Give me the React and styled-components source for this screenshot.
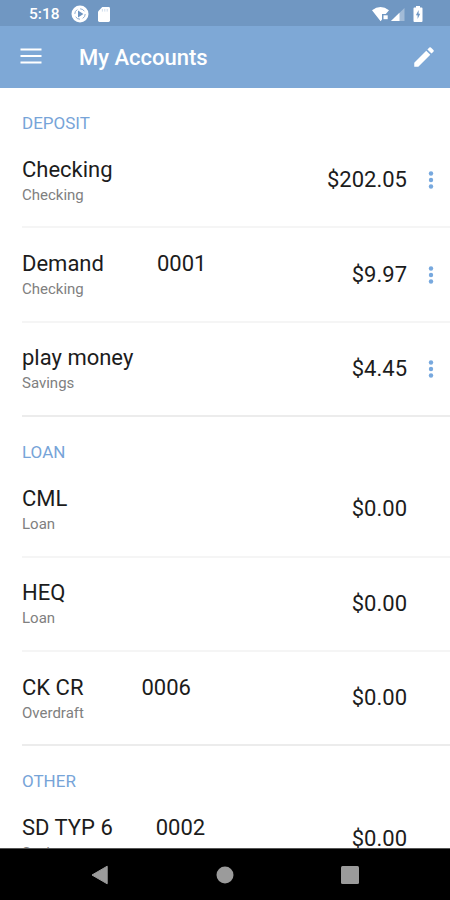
import styled, { createGlobalStyle } from 'styled-components';

const sections = [
  {
    title: 'DEPOSIT',
    accounts: [
      { name: 'Checking', type: 'Checking', balance: '$202.05', menu: true },
      { name: 'Demand', number: '0001', gap: 53, type: 'Checking', balance: '$9.97', menu: true },
      { name: 'play money', type: 'Savings', balance: '$4.45', menu: true },
    ],
  },
  {
    title: 'LOAN',
    accounts: [
      { name: 'CML', type: 'Loan', balance: '$0.00' },
      { name: 'HEQ', type: 'Loan', balance: '$0.00' },
      { name: 'CK CR', number: '0006', gap: 58, type: 'Overdraft', balance: '$0.00' },
    ],
  },
  {
    title: 'OTHER',
    accounts: [
      { name: 'SD TYP 6', number: '0002', gap: 43, type: 'Savings', balance: '$0.00' },
    ],
  },
];

function App() {
  return (
    <Screen>
      <GlobalStyle />
      <StatusBar>
        <Clock>5:18</Clock>
        <StatusIcon $left={11} width="18" height="18" viewBox="0 0 18 18">
          <circle cx="9" cy="9" r="8.5" fill="#fff" />
          <circle cx="9" cy="9" r="5.2" fill="none" stroke="#7097c4" strokeWidth="0.8" strokeDasharray="5 3" />
          <path d="M7 5.6v6.8L12.4 9z" fill="#6d94c1" />
        </StatusIcon>
        <StatusIcon $left={9} width="12" height="15" viewBox="0 0 12 15">
          <path d="M4.3 0H10.6Q12 0 12 1.4V13.6Q12 15 10.6 15H1.4Q0 15 0 13.6V4.4z" fill="#fff" />
          <path d="M4.4 2v2.6M6.8 2v2.6M9.2 2v2.6" stroke="#c8d8ea" strokeWidth="0.9" />
        </StatusIcon>
        <Spacer />
        <StatusIcon width="18" height="15" viewBox="0 0 18 15">
          <path d="M0 3.2Q8.5-3 17 3.2L13.8 7H10v5.6L8.6 14.2z" fill="#fff" />
          <path d="M11.5 8.3h4.2v3.9h-4.2z" fill="#fff" />
        </StatusIcon>
        <StatusIcon $left={1} width="14" height="13" viewBox="0 0 14 13">
          <path d="M13.5 0V13H0z" fill="#fff" fillOpacity="0.35" />
          <path d="M8.5 4.8V13H0z" fill="#fff" />
        </StatusIcon>
        <StatusIcon $left={8} width="10" height="16" viewBox="0 0 10 16">
          <path d="M3 0h4v1.6h1.6q.9 0 .9.9v12.6q0 .9-.9.9H1.4q-.9 0-.9-.9V2.500q0-.9.9-.9H3z" fill="#fff" />
          <path d="M5.600 4L2.900 9.200h1.700V13l2.600-5.200H5.600z" fill="#7097c4" />
        </StatusIcon>
      </StatusBar>
      <AppBar>
        <MenuIcon width="22" height="16" viewBox="0 0 22 16">
          <path d="M0.500 1.500h21M0.500 8h21M0.500 14.500h21" stroke="#fff" strokeWidth="2.200" />
        </MenuIcon>
        <Title>My Accounts</Title>
        <EditIcon width="26" height="26" viewBox="0 0 24 24">
          <path
            d="M3 17.250V21h3.750L17.810 9.940l-3.750-3.750L3 17.250zM20.710 7.040a1 1 0 0 0 0-1.410l-2.340-2.340a1 1 0 0 0-1.410 0l-1.830 1.830 3.750 3.750 1.830-1.830z"
            fill="#fff"
          />
        </EditIcon>
      </AppBar>
      <Content>
        {sections.map((section) => (
          <Section key={section.title}>
            <SectionTitle>{section.title}</SectionTitle>
            {section.accounts.map((account, i) => (
              <Account key={account.name} $last={i === section.accounts.length - 1}>
                <Details>
                  <Name>
                    {account.name}
                    {account.number && <Number $gap={account.gap}>{account.number}</Number>}
                  </Name>
                  <Type>{account.type}</Type>
                </Details>
                <Balance>{account.balance}</Balance>
                <More>
                  {account.menu && (
                    <svg width="6" height="18" viewBox="0 0 6 18" fill="#77a8de">
                      <circle cx="3" cy="2.500" r="2.200" />
                      <circle cx="3" cy="9" r="2.200" />
                      <circle cx="3" cy="15.500" r="2.200" />
                    </svg>
                  )}
                </More>
              </Account>
            ))}
          </Section>
        ))}
      </Content>
      <NavBar>
        <svg width="18" height="20" viewBox="0 0 18 20">
          <path d="M16.200 1.200v17.600L1 10z" fill="#9b9b9b" stroke="#9b9b9b" strokeLinejoin="round" />
        </svg>
        <svg width="18" height="18" viewBox="0 0 18 18">
          <circle cx="9" cy="9" r="8.500" fill="#9b9b9b" />
        </svg>
        <svg width="18" height="18" viewBox="0 0 18 18">
          <rect width="18" height="18" rx="1.500" fill="#9b9b9b" />
        </svg>
      </NavBar>
    </Screen>
  );
}

export default App;

const GlobalStyle = createGlobalStyle`
  * {
    box-sizing: border-box;
  }
  body {
    margin: 0;
    background: #fff;
    font-family: Roboto, sans-serif;
  }
  svg {
    display: block;
    flex-shrink: 0;
  }
`;

const Screen = styled.div`
  width: 450px;
  height: 900px;
  display: flex;
  flex-direction: column;
  overflow: hidden;
`;

const StatusBar = styled.div`
  height: 26px;
  flex-shrink: 0;
  display: flex;
  align-items: center;
  padding: 2px 27px 0 29px;
  background: #7097c2;
`;

const Clock = styled.div`
  color: #fff;
  font-size: 15.5px;
  font-weight: 500;
`;

const StatusIcon = styled.svg`
  margin-left: ${(props) => props.$left || 0}px;
`;

const Spacer = styled.div`
  flex: 1;
`;

const AppBar = styled.div`
  height: 62px;
  flex-shrink: 0;
  display: flex;
  align-items: center;
  padding: 0 13px 0 20px;
  background: #7ea8d6;
`;

const MenuIcon = styled.svg`
  margin-top: -2px;
`;

const Title = styled.div`
  flex: 1;
  margin-left: 37px;
  color: #fff;
  font-size: 22px;
  font-weight: 500;
`;

const EditIcon = styled.svg`
  margin-top: -1px;
`;

const Content = styled.div`
  flex: 1;
  min-height: 0;
  overflow: hidden;
  background: #fff;
`;

const Section = styled.div`
  padding-left: 22px;
`;

const SectionTitle = styled.div`
  height: 46px;
  padding-top: 25px;
  color: #77a4d8;
  font-size: 17px;
  line-height: 20px;
`;

const Account = styled.div`
  height: 94.4px;
  display: flex;
  align-items: center;
  border-bottom: ${(props) => (props.$last ? '2px solid #ececec' : '2px solid #f5f5f5')};
`;

const Details = styled.div`
  flex: 1;
`;

const Name = styled.div`
  color: #1c1c1c;
  font-size: 22px;
  line-height: 26px;
  white-space: nowrap;
`;

const Number = styled.span`
  margin-left: ${(props) => props.$gap}px;
`;

const Type = styled.div`
  margin-top: 3px;
  color: #808080;
  font-size: 15px;
  line-height: 18px;
`;

const Balance = styled.div`
  color: #1c1c1c;
  font-size: 22px;
  line-height: 26px;
`;

const More = styled.div`
  width: 43px;
  display: flex;
  padding-left: 21px;
`;

const NavBar = styled.div`
  height: 52px;
  flex-shrink: 0;
  display: flex;
  align-items: center;
  justify-content: space-between;
  padding: 0 91px;
  border-top: 1px solid #555;
  background: #000;
`;
